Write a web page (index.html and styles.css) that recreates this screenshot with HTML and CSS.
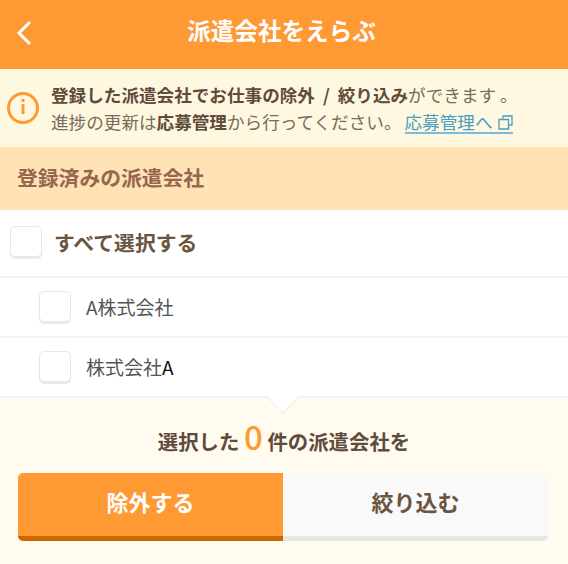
FILE: index.html
```html
<!DOCTYPE html>
<html lang="ja">
<head>
  <meta charset="UTF-8" />
  <title>派遣会社をえらぶ</title>
  <link rel="stylesheet" href="styles.css">
</head>
<body>
  <header class="top-bar">
    <svg class="back-icon" width="18" height="26" viewBox="0 0 18 26"><path d="M15 2 L4 13 L15 24" fill="none" stroke="#fff" stroke-width="3"/></svg>
    <h1>派遣会社をえらぶ</h1>
  </header>

  <div class="notice">
    <svg class="info-icon" width="34" height="34" viewBox="0 0 34 34">
      <circle cx="17" cy="17" r="14.5" fill="none" stroke="#ff9933" stroke-width="3"/>
      <rect x="15.5" y="13" width="3" height="10" fill="#ff9933"/>
      <rect x="15.5" y="8" width="3" height="3" fill="#ff9933"/>
    </svg>
    <p>
      <strong class="wide">登録した派遣会社でお仕事の除外 / 絞り込み</strong>ができます 。<br>
      進捗の更新は<strong>応募管理</strong>から行ってください。<a href="#">応募管理へ<svg class="ext-icon" width="15" height="15" viewBox="0 0 15 15"><path d="M5 3.5 V1 H14 V10 H11 M1 4.5 H10.500 V14 H1 Z" fill="none" stroke="#4a9dc4" stroke-width="1.300"/></svg></a>
    </p>
  </div>

  <h2 class="section-title">登録済みの派遣会社</h2>

  <ul class="company-list">
    <li class="all"><span class="check"></span><span>すべて選択する</span></li>
    <li class="child"><span class="check"></span><span>A株式会社</span></li>
    <li class="child"><span class="check"></span><span>株式会社<span class="black">A</span></span></li>
  </ul>

  <div class="action-box">
    <p class="count">選択した <span class="num">0</span> 件の派遣会社を</p>
    <div class="buttons">
      <button class="btn btn-exclude">除外する</button>
      <button class="btn btn-narrow">絞り込む</button>
    </div>
  </div>
</body>
</html>
```

FILE: styles.css
```css
* {
  box-sizing: border-box;
}
body {
  margin: 0;
  height: 564px;
  overflow: hidden;
  font-family: "Noto Sans CJK JP", "Liberation Sans", sans-serif;
  background-color: #fffbef;
  color: #5f4b3c;
}
.top-bar {
  position: relative;
  height: 69px;
  background: #ff9933;
  display: flex;
  align-items: center;
  justify-content: center;
}
.top-bar h1 {
  margin: 0 5px 10px 0;
  font-size: 23.6px;
  color: #fff;
}
.back-icon {
  position: absolute;
  left: 15px;
  top: 20px;
}
.notice {
  height: 78px;
  background: #fff8e0;
  display: flex;
  align-items: center;
  padding-left: 6px;
  gap: 11px;
}
.notice p {
  margin: 0;
  font-size: 17.6px;
  line-height: 27px;
  white-space: nowrap;
  color: #7a6a5c;
}
.notice strong {
  color: #5f4b3c;
}
.notice .wide {
  word-spacing: 4px;
}
.notice a {
  display: inline-block;
  margin-left: 3px;
  line-height: 21px;
  color: #4a9dc4;
  text-decoration: none;
  border-bottom: 2px solid #7dbbd8;
}
.ext-icon {
  margin-left: 6px;
  vertical-align: -1px;
}
.section-title {
  margin: 0;
  height: 63px;
  padding-left: 17px;
  line-height: 60px;
  font-size: 20.8px;
  background: #ffe3b5;
  color: #96664f;
}
.company-list {
  margin: 0;
  padding: 0;
  list-style: none;
  background: #fff;
}
.company-list li {
  display: flex;
  align-items: center;
  border-bottom: 2px solid #f3f3f3;
}
.all {
  height: 68px;
  padding: 0 0 3px 10px;
  font-size: 20.8px;
  font-weight: bold;
  color: #6b5440;
  gap: 12px;
}
.child {
  height: 60px;
  padding: 0 0 1px 39px;
  font-size: 19px;
  color: #555;
  gap: 15px;
}
.black {
  color: #111;
}
.check {
  width: 32px;
  height: 31px;
  background: #fff;
  border: 1px solid #e8e8e8;
  box-shadow: 0 2px 0 #eaeaea;
  border-radius: 5px;
}
.action-box {
  position: relative;
  height: 167px;
  padding: 0 18px;
  text-align: center;
}
.action-box::before {
  content: "";
  position: absolute;
  left: 272px;
  top: -11px;
  width: 21px;
  height: 21px;
  background: #fff;
  transform: rotate(45deg);
  border-right: 1px solid #eee;
  border-bottom: 1px solid #eee;
}
.count {
  margin: 0;
  padding-top: 23px;
  height: 75px;
  font-size: 20.4px;
  font-weight: bold;
  color: #5f4b3c;
}
.num {
  font-size: 33px;
  font-weight: 500;
  color: #ff9933;
  line-height: 30px;
}
.buttons {
  display: flex;
  width: 530px;
}
.btn {
  flex: 1;
  height: 68px;
  border: 0;
  padding: 0 0 8px;
  font-family: inherit;
  font-size: 22px;
  font-weight: bold;
}
.btn-exclude {
  background: #ff9933;
  color: #fff;
  border-bottom: 5px solid #cc6600;
  border-radius: 5px 0 0 5px;
}
.btn-narrow {
  background: #f9f9f9;
  color: #6b5440;
  border-bottom: 5px solid #e6e6e6;
  border-radius: 0 5px 5px 0;
}
```
